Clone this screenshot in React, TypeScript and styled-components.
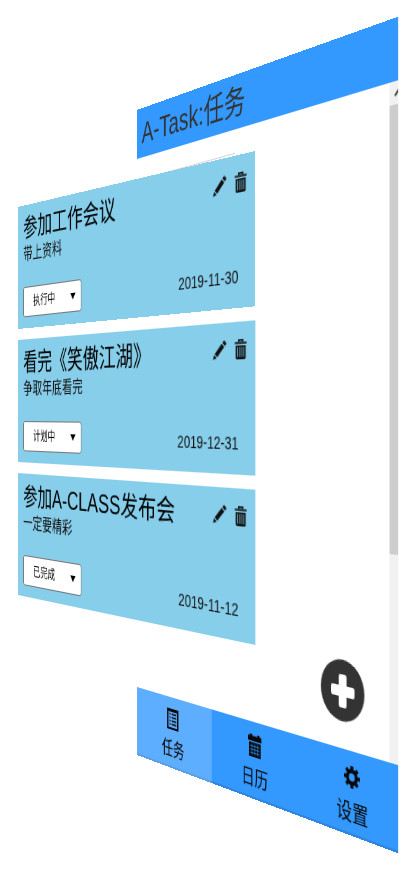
import React from "react";
import styled, { createGlobalStyle } from "styled-components";

const GlobalStyle = createGlobalStyle`
  * { box-sizing: border-box; }
  body {
    margin: 0;
    background: #fff;
    color: #111;
    font-family: "Liberation Sans", "Noto Sans CJK SC", sans-serif;
  }
`;

/* The app panel and the lifted task list share one grid cell. */
const Scene = styled.div`
  display: grid;
  grid-template-columns: minmax(0, 1fr);
  min-height: 100vh;
  padding: 110px 0 122px;
  overflow: hidden;
  & > * {
    grid-area: 1 / 1;
  }
`;

const Panel = styled.div`
  display: flex;
  width: calc(84% + 2px);
  margin-left: 33%;
  overflow: hidden;
  transform-origin: 0 314px;
  transform: perspective(1255px) rotateY(-55deg);
`;

const AppFrame = styled.div`
  display: flex;
  flex-direction: column;
  flex: 0 0 calc(100% + 10px);
`;

const Header = styled.header`
  display: flex;
  align-items: center;
  height: 49px;
  padding-left: 8px;
  background: #3399ff;
`;

const AppTitle = styled.h1`
  margin: 0;
  font-size: 30px;
  line-height: 48px;
  font-weight: 400;
  color: #333;
`;

const Content = styled.main`
  display: flex;
  flex: 1;
  background: #fff;
`;

const Page = styled.div`
  display: flex;
  flex: 1;
  flex-direction: column;
  justify-content: space-between;
  padding: 21px 27px 22px 0;
`;

const Rule = styled.div`
  width: 154px;
  height: 1px;
  background: #d5d5d5;
`;

const AddButton = styled.button`
  display: flex;
  align-items: center;
  justify-content: center;
  align-self: flex-end;
  width: 50px;
  height: 50px;
  padding: 0;
  border: 0;
  border-radius: 50%;
  background: #333;
  color: #fff;
`;

const ScrollTrack = styled.div`
  display: flex;
  flex-direction: column;
  width: 19px;
  background: #f1f1f1;
`;

const ScrollArrow = styled.div`
  display: flex;
  align-items: center;
  justify-content: center;
  height: 18px;
`;

const ScrollThumb = styled.div`
  height: 66%;
  background: #cdcdcd;
`;

const TabBar = styled.nav`
  display: flex;
  height: 68px;
  background: #3399ff;
  box-shadow: inset 0 -2px 0 #2e86de;
`;

const Tab = styled.a<{ $active?: boolean }>`
  display: flex;
  flex: 1;
  flex-direction: column;
  align-items: center;
  gap: 6px;
  padding-top: 11px;
  background: ${(p) => (p.$active ? "rgba(255, 255, 255, 0.21)" : "transparent")};
  color: #080808;
  font-size: 18px;
  line-height: 26px;
  text-decoration: none;
`;

const TaskList = styled.ul`
  display: flex;
  flex-direction: column;
  align-self: start;
  gap: 11px;
  width: calc(78% + 1px);
  margin: 97px 0 0 18px;
  padding: 0;
  list-style: none;
  transform-origin: 0 205px;
  transform: perspective(1240px) rotateY(-55deg);
`;

const Card = styled.li`
  display: flex;
  flex-direction: column;
  justify-content: space-between;
  height: 122px;
  padding: 9px 9px 11px 9px;
  background: #87ceeb;
`;

const CardRow = styled.div<{ $align: string }>`
  display: flex;
  align-items: ${(p) => p.$align};
  justify-content: space-between;
`;

const CardTitle = styled.h2`
  margin: 0;
  font-size: 24px;
  line-height: 28px;
  font-weight: 400;
  color: #000;
`;

const CardNote = styled.p`
  margin: 0;
  font-size: 16px;
  line-height: 24px;
`;

const Actions = styled.div`
  display: flex;
  gap: 9px;
  padding-top: 5px;
`;

const IconButton = styled.button`
  display: flex;
  padding: 0;
  border: 0;
  background: none;
  color: #111;
`;

const SelectBox = styled.div`
  display: grid;
  align-items: center;
  width: 94px;
  & > * {
    grid-area: 1 / 1;
  }
  & > svg {
    justify-self: end;
    margin-right: 9px;
    pointer-events: none;
  }
`;

const StatusSelect = styled.select`
  width: 100%;
  height: 30px;
  padding: 0 20px 0 16px;
  border: 1px solid #777;
  border-radius: 3px;
  appearance: none;
  background: #fff;
  color: #000;
  font-family: inherit;
  font-size: 12px;
`;

const DueDate = styled.time`
  padding: 2px 10px 0 0;
  font-size: 14px;
  line-height: 20px;
`;

const PencilIcon = () => (
  <svg width="16" height="16" viewBox="0 0 16 16" fill="currentColor" aria-hidden="true">
    <path d="M12.6.7a1.2 1.2 0 0 1 1.7 0l1.2 1.2a1.2 1.2 0 0 1 0 1.7l-1.2 1.2-2.9-2.9zM10.6 2.7l2.9 2.9-8 8-2.9-2.9zM2 11.4l2.8 2.8-4.2 1.4z" />
  </svg>
);

const TrashIcon = () => (
  <svg width="14" height="16" viewBox="0 0 14 16" aria-hidden="true">
    <path d="M4.7 2V.8h4.6V2" fill="none" stroke="currentColor" strokeWidth="1.4" />
    <path d="M.5 2.2h13v1.6H.5zM1.5 5h11v9.6c0 .8-.5 1.3-1.2 1.3H2.7c-.7 0-1.2-.5-1.2-1.3z" fill="currentColor" />
    <path d="M3.6 6.2v8M5.9 6.2v8M8.1 6.2v8M10.4 6.2v8" stroke="#6fadc6" strokeWidth=".9" />
  </svg>
);

const PlusIcon = () => (
  <svg width="27" height="27" viewBox="0 0 27 27" fill="currentColor" aria-hidden="true">
    <path d="M11 0h5a2 2 0 0 1 2 2v7h7a2 2 0 0 1 2 2v5a2 2 0 0 1-2 2h-7v7a2 2 0 0 1-2 2h-5a2 2 0 0 1-2-2v-7H2a2 2 0 0 1-2-2v-5a2 2 0 0 1 2-2h7V2a2 2 0 0 1 2-2z" />
  </svg>
);

const ListIcon = () => (
  <svg width="18" height="20" viewBox="0 0 18 20" fill="currentColor" aria-hidden="true">
    <path fillRule="evenodd" d="M0 0h18v20H0zM2 3v15h14V3z" />
    <path d="M3.5 4.6h2v1.5h-2zM7 4.6h7.5v1.5H7zM3.5 7.8h2v1.5h-2zM7 7.8h7.5v1.5H7zM3.5 11h2v1.5h-2zM7 11h7.5v1.5H7zM3.5 14.2h2v1.5h-2zM7 14.2h7.5v1.5H7z" />
  </svg>
);

const CalendarIcon = () => (
  <svg width="18" height="20" viewBox="0 0 18 20" aria-hidden="true">
    <path d="M2.5 0h3v1.5h7V0h3v1.5H18V6H0V1.5h2.5zM1 7.2h16V20H1z" fill="currentColor" />
    <path d="M2.5 10.6h13M2.5 13.6h13M2.5 16.6h13M5.2 8.5v10M9 8.5v10M12.8 8.5v10" stroke="#3399ff" strokeWidth=".7" />
  </svg>
);

const GearIcon = () => (
  <svg width="18" height="20" viewBox="-9 -10 18 20" fill="none" stroke="currentColor" aria-hidden="true">
    <circle r="5" strokeWidth="3.4" />
    <path
      d="M0-9v3M0 6v3M-9 0h3M6 0h3M-6.4-6.4l2 2M4.4 4.4l2 2M-6.4 6.4l2-2M4.4-4.4l2-2"
      strokeWidth="3.2"
    />
  </svg>
);

const CaretDown = () => (
  <svg width="8" height="6" viewBox="0 0 8 6" aria-hidden="true">
    <path d="M0 0h8L4 6z" fill="#000" />
  </svg>
);

const statuses = ["计划中", "执行中", "已完成"];

const tasks = [
  { title: "参加工作会议", note: "带上资料", status: "执行中", date: "2019-11-30" },
  { title: "看完《笑傲江湖》", note: "争取年底看完", status: "计划中", date: "2019-12-31" },
  { title: "参加A-CLASS发布会", note: "一定要精彩", status: "已完成", date: "2019-11-12" },
];

export default function App() {
  return (
    <>
      <GlobalStyle />
      <Scene>
        <Panel>
          <AppFrame>
            <Header>
              <AppTitle>A-Task:任务</AppTitle>
            </Header>
            <Content>
              <Page>
                <Rule />
                <AddButton type="button" aria-label="添加任务">
                  <PlusIcon />
                </AddButton>
              </Page>
              <ScrollTrack>
                <ScrollArrow>
                  <svg width="9" height="6" viewBox="0 0 9 6" aria-hidden="true">
                    <path d="M.7 5.2 4.5 1.4l3.8 3.8" fill="none" stroke="#444" strokeWidth="2" />
                  </svg>
                </ScrollArrow>
                <ScrollThumb />
              </ScrollTrack>
            </Content>
            <TabBar>
              <Tab href="#tasks" $active>
                <ListIcon />
                任务
              </Tab>
              <Tab href="#calendar">
                <CalendarIcon />
                日历
              </Tab>
              <Tab href="#settings">
                <GearIcon />
                设置
              </Tab>
            </TabBar>
          </AppFrame>
        </Panel>
        <TaskList>
          {tasks.map((task) => (
            <Card key={task.title}>
              <CardRow $align="flex-start">
                <div>
                  <CardTitle>{task.title}</CardTitle>
                  <CardNote>{task.note}</CardNote>
                </div>
                <Actions>
                  <IconButton type="button" aria-label="编辑">
                    <PencilIcon />
                  </IconButton>
                  <IconButton type="button" aria-label="删除">
                    <TrashIcon />
                  </IconButton>
                </Actions>
              </CardRow>
              <CardRow $align="center">
                <SelectBox>
                  <StatusSelect aria-label="状态" defaultValue={task.status}>
                    {statuses.map((status) => (
                      <option key={status}>{status}</option>
                    ))}
                  </StatusSelect>
                  <CaretDown />
                </SelectBox>
                <DueDate dateTime={task.date}>{task.date}</DueDate>
              </CardRow>
            </Card>
          ))}
        </TaskList>
      </Scene>
    </>
  );
}
